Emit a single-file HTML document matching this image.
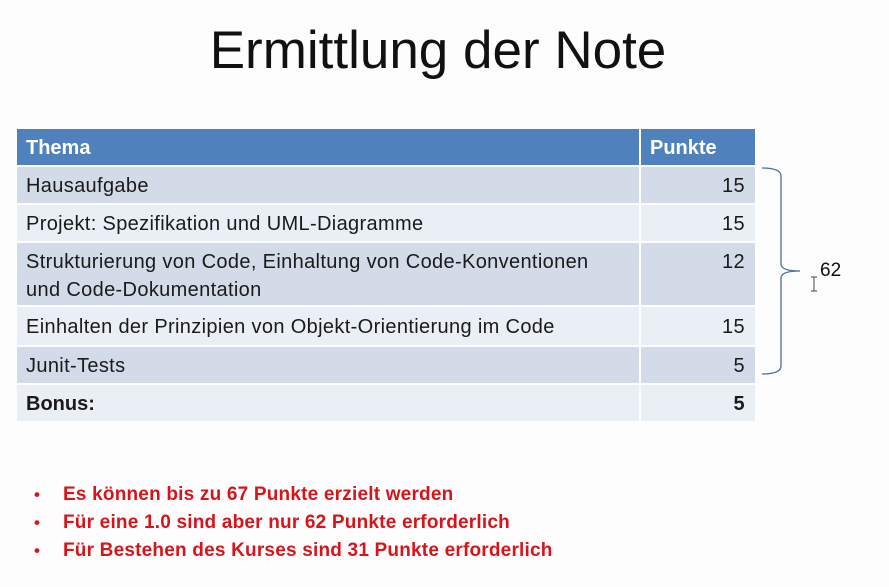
<!DOCTYPE html>
<html><head><meta charset="utf-8"><style>
body{margin:0;width:889px;height:587px;background:#fdfdfd;position:relative;overflow:hidden;font-family:"Liberation Sans",sans-serif}
.t{position:absolute;white-space:nowrap}
#title{left:0;width:876px;text-align:center;top:21px;font-size:53px;color:#111;line-height:60px}
.row{position:absolute;left:17px;width:738px}
.c1{position:absolute;left:0;width:622px;top:0;bottom:0}
.c2{position:absolute;left:624px;width:114px;top:0;bottom:0}
.txt{position:absolute;font-size:20px;letter-spacing:0.35px;color:#1a1a1a;white-space:nowrap;line-height:28px}
.num{right:10px}
.r{color:#d8141a;font-weight:bold;font-size:19px;letter-spacing:0.2px;left:63px}
.b{color:#d8141a;font-weight:bold;font-size:17px;left:34px}
</style></head><body>
<div class="t" id="title">Ermittlung der Note</div>

<div class="row" style="top:129px;height:36px"><div class="c1" style="background:#4f81bd"></div><div class="c2" style="background:#4f81bd"></div>
<div class="txt" style="left:9px;top:5px;color:#fff;font-weight:bold;letter-spacing:0">Thema</div><div class="txt" style="left:633px;top:5px;color:#fff;font-weight:bold;letter-spacing:0">Punkte</div></div>

<div class="row" style="top:167px;height:36px"><div class="c1" style="background:#d3dae8"></div><div class="c2" style="background:#d3dae8"></div>
<div class="txt" style="left:9px;top:5px">Hausaufgabe</div><div class="txt num" style="top:5px">15</div></div>

<div class="row" style="top:205px;height:36px"><div class="c1" style="background:#eaeef5"></div><div class="c2" style="background:#eaeef5"></div>
<div class="txt" style="left:9px;top:5px">Projekt: Spezifikation und UML-Diagramme</div><div class="txt num" style="top:5px">15</div></div>

<div class="row" style="top:243px;height:62px"><div class="c1" style="background:#d3dae8"></div><div class="c2" style="background:#d3dae8"></div>
<div class="txt" style="left:9px;top:5px">Strukturierung von Code, Einhaltung von Code-Konventionen</div>
<div class="txt" style="left:9px;top:33px">und Code-Dokumentation</div><div class="txt num" style="top:5px">12</div></div>

<div class="row" style="top:307px;height:38px"><div class="c1" style="background:#eaeef5"></div><div class="c2" style="background:#eaeef5"></div>
<div class="txt" style="left:9px;top:6px">Einhalten der Prinzipien von Objekt-Orientierung im Code</div><div class="txt num" style="top:6px">15</div></div>

<div class="row" style="top:347px;height:36px"><div class="c1" style="background:#d3dae8"></div><div class="c2" style="background:#d3dae8"></div>
<div class="txt" style="left:9px;top:5px">Junit-Tests</div><div class="txt num" style="top:5px">5</div></div>

<div class="row" style="top:385px;height:36px"><div class="c1" style="background:#eaeef5"></div><div class="c2" style="background:#eaeef5"></div>
<div class="txt" style="left:9px;top:5px;font-weight:bold;letter-spacing:0">Bonus:</div><div class="txt num" style="top:5px;font-weight:bold">5</div></div>

<svg style="position:absolute;left:0;top:0" width="889" height="587">
<path d="M762 168 Q781 168 781 176 L781 264 Q781 271 800 271 Q781 271 781 278 L781 366 Q781 374 762 374" fill="none" stroke="#4a6fa0" stroke-width="1.3"/>
<path d="M811 277 h6 M814 277 v14 M811 291 h6" stroke="#666" stroke-width="1.2" fill="none"/>
</svg>
<div class="t" style="left:820px;top:260px;font-size:19px;color:#111">62</div>

<div class="t b" style="top:485px">•</div><div class="t r" style="top:484px">Es können bis zu 67 Punkte erzielt werden</div>
<div class="t b" style="top:513px">•</div><div class="t r" style="top:512px">Für eine 1.0 sind aber nur 62 Punkte erforderlich</div>
<div class="t b" style="top:541px">•</div><div class="t r" style="top:540px">Für Bestehen des Kurses sind 31 Punkte erforderlich</div>
</body></html>
